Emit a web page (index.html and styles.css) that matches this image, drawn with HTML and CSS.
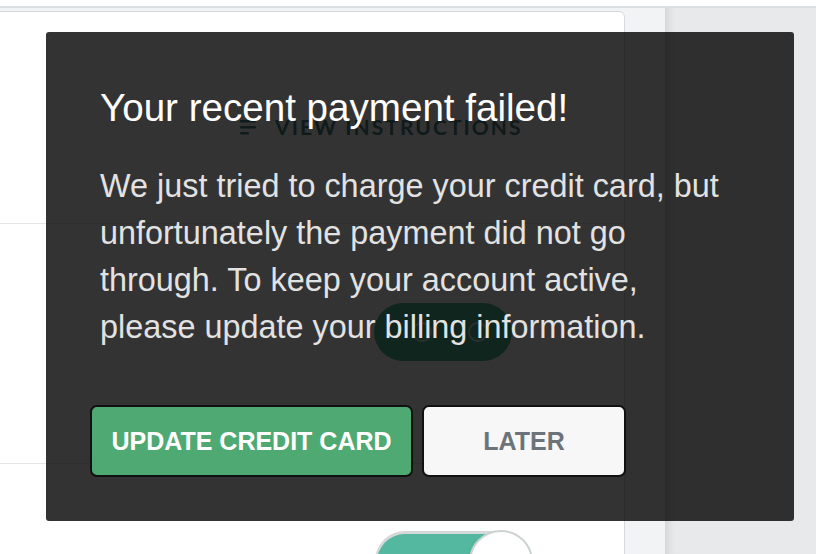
FILE: index.html
```html
<!DOCTYPE html>
<html lang="en">
<head>
    <meta charset="UTF-8">
    <meta name="viewport" content="width=device-width, initial-scale=1.0">
    <title>Payment failed</title>
    <link rel="stylesheet" href="styles.css">
</head>
<body>
    <div class="topbar"></div>
    <div class="main">
        <div class="content">
            <div class="card">
                <div class="card-head">
                    <a class="view-link" href="#">
                        <svg class="lines" width="16" height="16" viewBox="0 0 16 16">
                            <rect x="0" y="1" width="16" height="2.4" rx="1"/>
                            <rect x="0" y="7" width="16" height="2.4" rx="1"/>
                            <rect x="0" y="13" width="9" height="2.4" rx="1"/>
                        </svg>
                        VIEW INSTRUCTIONS
                    </a>
                </div>
                <div class="card-row row-pill">
                    <span class="pill">
                        <span class="pill-icon"></span>
                        <span class="pill-icon"></span>
                    </span>
                </div>
                <div class="card-row row-toggle">
                    <span class="toggle">
                        <span class="toggle-label">ON</span>
                        <span class="knob"></span>
                    </span>
                </div>
            </div>
        </div>
        <div class="side"></div>
    </div>

    <div class="modal">
        <h2>Your recent payment failed!</h2>
        <p>We just tried to charge your credit card, but unfortunately the payment did not go through. To keep your account active, please update your billing information.</p>
        <div class="actions">
            <button class="btn btn-primary">UPDATE CREDIT CARD</button>
            <button class="btn btn-light">LATER</button>
        </div>
    </div>
</body>
</html>
```

FILE: styles.css
```css
body {
    margin: 0;
    font-family: "Liberation Sans", Arial, sans-serif;
    background-color: #fff;
    overflow: hidden;
}
.topbar {
    height: 6px;
    background: #fff;
    border-bottom: 2px solid #dadee1;
}
.main {
    display: flex;
    height: 546px;
}
.content {
    flex: 0 0 665px;
    box-sizing: border-box;
    padding: 3px 40px 0 0;
    background: #f2f3f5;
    overflow: hidden;
}
.card {
    width: 635px;
    margin-left: -10px;
    box-sizing: border-box;
    background: #fff;
    border: 1px solid #d5dadd;
    border-radius: 6px;
    height: 700px;
}
.card-head {
    height: 212px;
    box-sizing: border-box;
    padding: 103px 0 0 249px;
    border-bottom: 1px solid #e4e7e9;
}
.view-link {
    display: flex;
    align-items: center;
    gap: 19px;
    font-family: Lato, sans-serif;
    font-weight: bold;
    font-size: 21px;
    line-height: 24px;
    letter-spacing: 2.05px;
    color: #4f8484;
    text-decoration: none;
}
.lines {
    fill: #4f8484;
}
.card-row {
    display: flex;
    box-sizing: border-box;
    border-bottom: 1px solid #e4e7e9;
}
.row-pill {
    height: 240px;
    padding: 79px 0 0 383px;
}
.pill {
    display: flex;
    align-items: center;
    justify-content: flex-end;
    gap: 36px;
    width: 138px;
    height: 58px;
    box-sizing: border-box;
    padding-right: 24px;
    border-radius: 29px;
    background: #55b99d;
}
.pill-icon {
    width: 20px;
    height: 20px;
    box-sizing: border-box;
    border: 2px solid rgba(255, 255, 255, 0.7);
    border-radius: 50%;
}
.row-toggle {
    padding: 66px 0 0 386px;
    border-bottom: none;
}
.toggle {
    display: flex;
    align-items: center;
    position: relative;
    width: 150px;
    height: 56px;
    margin-top: 4px;
    border-radius: 28px;
    background: #53b89f;
    box-shadow: 0 -1px 0 2px #d4d8d8;
}
.toggle-label {
    padding-left: 36px;
    color: #fff;
    font-weight: bold;
    font-size: 22px;
}
.knob {
    position: absolute;
    right: -6px;
    top: -4px;
    width: 64px;
    height: 64px;
    box-sizing: border-box;
    border-radius: 50%;
    background: #fff;
    border: 2px solid #cdd2d2;
}
.side {
    flex: 1;
    background: #e8e9eb;
    box-shadow: inset 10px 0 10px -8px rgba(0, 0, 0, 0.12);
}
.modal {
    position: absolute;
    left: 46px;
    top: 32px;
    width: 748px;
    height: 489px;
    box-sizing: border-box;
    padding: 54px;
    background: rgba(0, 0, 0, 0.8);
    border-radius: 3px;
}
.modal h2 {
    margin: 0;
    font-size: 38.6px;
    line-height: 44px;
    font-weight: normal;
    color: #fff;
}
.modal p {
    max-width: 630px;
    margin: 33px 0 0;
    font-size: 32.4px;
    line-height: 47px;
    color: #e2e2e2;
}
.actions {
    display: flex;
    gap: 9px;
    margin: 54px 0 0 -10px;
}
.btn {
    height: 72px;
    box-sizing: border-box;
    border: 2px solid #111;
    border-radius: 7px;
    font-family: "Liberation Sans", Arial, sans-serif;
    font-weight: bold;
    font-size: 25px;
    cursor: pointer;
}
.btn-primary {
    width: 323px;
    background: #4fa972;
    color: #fff;
}
.btn-light {
    width: 204px;
    background: #f7f7f8;
    color: #6c737a;
}
```
